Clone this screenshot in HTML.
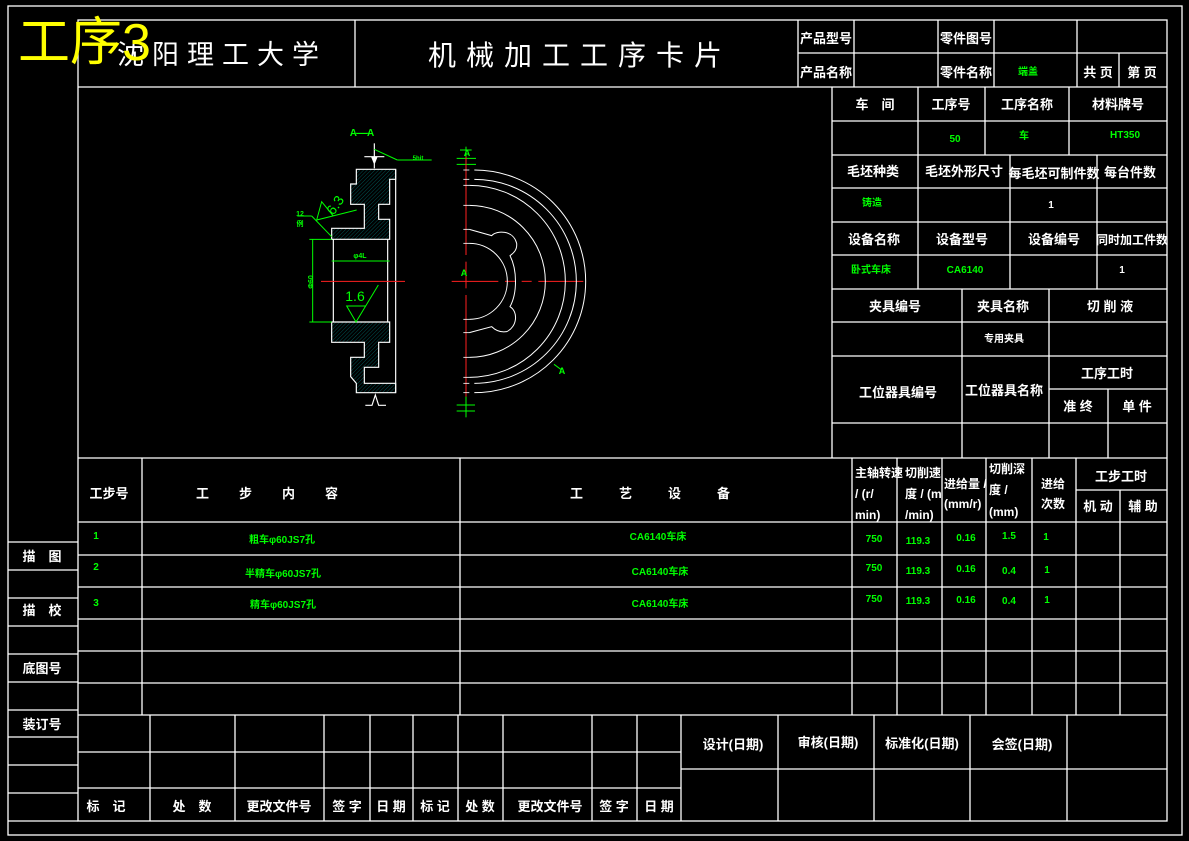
<!DOCTYPE html>
<html><head><meta charset="utf-8"><style>
html,body{margin:0;padding:0;background:#000;}
svg{display:block}
text{font-family:"Liberation Sans","Noto Sans CJK SC","WenQuanYi Zen Hei",sans-serif;fill:#fff;text-anchor:middle;font-weight:bold}
.g{fill:#00ff00}
.s{font-size:13px}
.x{font-size:10px}
</style></head><body>
<svg width="1189" height="841" viewBox="0 0 1189 841" xmlns="http://www.w3.org/2000/svg">
<defs>
<pattern id="h" width="8" height="8" patternUnits="userSpaceOnUse" patternTransform="rotate(45)">
<line x1="0" y1="0" x2="0" y2="8" stroke="#00c8c8" stroke-width="1.2"/>
</pattern>
</defs>
<rect width="1189" height="841" fill="#000"/>
<g stroke="#fff" stroke-width="1.3" fill="none">
<rect x="8" y="6" width="1174" height="829"/>
<rect x="78" y="20" width="1089" height="801"/>
<line x1="8" y1="821" x2="78" y2="821"/>
<line x1="78" y1="87" x2="1167" y2="87"/>
<line x1="355" y1="20" x2="355" y2="87"/>
<line x1="798" y1="20" x2="798" y2="87"/>
<line x1="798" y1="53" x2="1167" y2="53"/>
<line x1="854" y1="20" x2="854" y2="87"/>
<line x1="938" y1="20" x2="938" y2="87"/>
<line x1="994" y1="20" x2="994" y2="87"/>
<line x1="1077" y1="20" x2="1077" y2="87"/>
<line x1="1119" y1="53" x2="1119" y2="87"/>
<line x1="832" y1="87" x2="832" y2="458"/>
<line x1="832" y1="121" x2="1167" y2="121"/>
<line x1="832" y1="155" x2="1167" y2="155"/>
<line x1="832" y1="188" x2="1167" y2="188"/>
<line x1="832" y1="222" x2="1167" y2="222"/>
<line x1="832" y1="255" x2="1167" y2="255"/>
<line x1="832" y1="289" x2="1167" y2="289"/>
<line x1="832" y1="322" x2="1167" y2="322"/>
<line x1="832" y1="356" x2="1167" y2="356"/>
<line x1="1049" y1="389" x2="1167" y2="389"/>
<line x1="832" y1="423" x2="1167" y2="423"/>
<line x1="918" y1="87" x2="918" y2="289"/>
<line x1="985" y1="87" x2="985" y2="155"/>
<line x1="1069" y1="87" x2="1069" y2="155"/>
<line x1="1010" y1="155" x2="1010" y2="289"/>
<line x1="1097" y1="155" x2="1097" y2="289"/>
<line x1="962" y1="289" x2="962" y2="458"/>
<line x1="1049" y1="289" x2="1049" y2="458"/>
<line x1="1108" y1="389" x2="1108" y2="458"/>
<line x1="78" y1="458" x2="1167" y2="458"/>
<line x1="78" y1="522" x2="1167" y2="522"/>
<line x1="78" y1="555" x2="1167" y2="555"/>
<line x1="78" y1="587" x2="1167" y2="587"/>
<line x1="78" y1="619" x2="1167" y2="619"/>
<line x1="78" y1="651" x2="1167" y2="651"/>
<line x1="78" y1="683" x2="1167" y2="683"/>
<line x1="78" y1="715" x2="1167" y2="715"/>
<line x1="142" y1="458" x2="142" y2="715"/>
<line x1="460" y1="458" x2="460" y2="715"/>
<line x1="852" y1="458" x2="852" y2="715"/>
<line x1="897" y1="458" x2="897" y2="715"/>
<line x1="942" y1="458" x2="942" y2="715"/>
<line x1="986" y1="458" x2="986" y2="715"/>
<line x1="1032" y1="458" x2="1032" y2="715"/>
<line x1="1076" y1="458" x2="1076" y2="715"/>
<line x1="1076" y1="490" x2="1167" y2="490"/>
<line x1="1120" y1="490" x2="1120" y2="715"/>
<line x1="8" y1="542" x2="78" y2="542"/>
<line x1="8" y1="570" x2="78" y2="570"/>
<line x1="8" y1="598" x2="78" y2="598"/>
<line x1="8" y1="626" x2="78" y2="626"/>
<line x1="8" y1="654" x2="78" y2="654"/>
<line x1="8" y1="682" x2="78" y2="682"/>
<line x1="8" y1="710" x2="78" y2="710"/>
<line x1="8" y1="737" x2="78" y2="737"/>
<line x1="8" y1="765" x2="78" y2="765"/>
<line x1="8" y1="793" x2="78" y2="793"/>
<line x1="78" y1="752" x2="681" y2="752"/>
<line x1="78" y1="788" x2="681" y2="788"/>
<line x1="150" y1="715" x2="150" y2="821"/>
<line x1="235" y1="715" x2="235" y2="821"/>
<line x1="324" y1="715" x2="324" y2="821"/>
<line x1="370" y1="715" x2="370" y2="821"/>
<line x1="413" y1="715" x2="413" y2="821"/>
<line x1="458" y1="715" x2="458" y2="821"/>
<line x1="503" y1="715" x2="503" y2="821"/>
<line x1="592" y1="715" x2="592" y2="821"/>
<line x1="637" y1="715" x2="637" y2="821"/>
<line x1="681" y1="715" x2="681" y2="821"/>
<line x1="681" y1="769" x2="1167" y2="769"/>
<line x1="778" y1="715" x2="778" y2="821"/>
<line x1="874" y1="715" x2="874" y2="821"/>
<line x1="970" y1="715" x2="970" y2="821"/>
<line x1="1067" y1="715" x2="1067" y2="821"/>
</g>

<g transform="translate(280,110) scale(0.33333)">
<g stroke="#fff" stroke-width="3.5">
<polygon fill="url(#h)" points="229,178 347,178 347,208 329,208 329,283 296,283 296,328 329,328 329,388 155,388 155,355 253,355 253,283 212,283 212,222 229,222"/>
<polygon fill="url(#h)" points="155,636 329,636 329,697 296,697 296,772 253,772 253,820 347,820 347,848 229,848 229,820 212,800 212,742 253,742 253,697 155,697"/>
<line x1="347" y1="178" x2="347" y2="848"/>
<line x1="160" y1="388" x2="160" y2="636"/>
<line x1="323" y1="388" x2="323" y2="636"/>
<line x1="283" y1="100" x2="283" y2="175"/>
<line x1="253" y1="140" x2="313" y2="140"/>
<polyline fill="none" points="256,886 276,886 286,855 296,886 318,886"/>
</g>
<polygon fill="#fff" points="273,140 293,140 285,160 281,160"/>
<g stroke="#00ff00" stroke-width="3" fill="none">
<line x1="283" y1="118" x2="352" y2="150"/><line x1="352" y1="150" x2="455" y2="150"/>
<line x1="88" y1="388" x2="155" y2="388"/><line x1="88" y1="636" x2="155" y2="636"/>
<line x1="98" y1="388" x2="98" y2="636"/>
<line x1="155" y1="453" x2="329" y2="453"/>
<polyline points="295,525 228,636 200,588 258,588"/>
<polyline points="230,300 110,330 125,275 160,318"/>
<line x1="52" y1="318" x2="95" y2="318"/><line x1="95" y1="318" x2="155" y2="380"/>
<line x1="228" y1="70" x2="268" y2="70"/>
<line x1="558" y1="110" x2="558" y2="150"/><line x1="530" y1="145" x2="588" y2="145"/><line x1="530" y1="163" x2="588" y2="163"/><line x1="540" y1="120" x2="575" y2="120"/>
<line x1="558" y1="850" x2="558" y2="922"/><line x1="530" y1="885" x2="585" y2="885"/><line x1="530" y1="903" x2="585" y2="903"/>
<line x1="822" y1="763" x2="845" y2="780"/>
</g>
<g stroke="#ff2020" stroke-width="3">
<line x1="123" y1="514" x2="375" y2="514"/>
<line x1="558" y1="140" x2="558" y2="435" />
<line x1="558" y1="455" x2="558" y2="535"/>
<line x1="558" y1="555" x2="558" y2="860"/>
<line x1="515" y1="514" x2="655" y2="514"/>
<line x1="675" y1="514" x2="705" y2="514"/>
<line x1="725" y1="514" x2="755" y2="514"/>
<line x1="775" y1="514" x2="910" y2="514"/>
</g>
<g stroke="#fff" stroke-width="3" fill="none">
<path d="M583,180 A332,332 0 0 1 583,848"/>
<path d="M583,208 A306,306 0 0 1 583,820"/>
<path d="M568,226 A288,288 0 0 1 568,802"/>
<path d="M568,286 A228,228 0 0 1 568,742"/>
<path d="M568,400 A114,114 0 0 1 568,628"/>
<path d="M568,358 L635,377 C650,360 700,360 710,400 C712,420 700,430 690,437 C712,480 712,550 690,590 C715,605 712,650 680,665 C660,668 645,660 635,650 L568,668"/>
<g stroke-width="2.5">
<line x1="550" y1="180" x2="568" y2="180"/><line x1="550" y1="208" x2="568" y2="208"/><line x1="550" y1="226" x2="568" y2="226"/><line x1="550" y1="286" x2="568" y2="286"/><line x1="550" y1="358" x2="568" y2="358"/><line x1="550" y1="400" x2="568" y2="400"/>
<line x1="550" y1="848" x2="568" y2="848"/><line x1="550" y1="820" x2="568" y2="820"/><line x1="550" y1="802" x2="568" y2="802"/><line x1="550" y1="742" x2="568" y2="742"/><line x1="550" y1="668" x2="568" y2="668"/><line x1="550" y1="628" x2="568" y2="628"/>
</g>
</g>
</g>
<g>
<text x="362" y="136" class="x" style="fill:#00ff00">A—A</text>
<text x="418" y="160" font-size="6" style="fill:#00ff00">5hit</text>
<text x="335" y="210" font-size="14" transform="rotate(-55 335 205)" style="fill:#00ff00;font-weight:normal">6.3</text>
<text x="300" y="216" font-size="7" style="fill:#00ff00">12</text>
<text x="300" y="226" font-size="7" style="fill:#00ff00">例</text>
<text x="360" y="258" font-size="7" style="fill:#00ff00">φ4L</text>
<text x="355" y="301" font-size="14" style="fill:#00ff00;font-weight:normal">1.6</text>
<text x="310" y="285" font-size="7" transform="rotate(-90 310 282)" style="fill:#00ff00">Φ60</text>
<text x="467" y="156" font-size="9" style="fill:#00ff00">A</text>
<text x="464" y="276" font-size="9" style="fill:#00ff00">A</text>
<text x="562" y="374" font-size="9" style="fill:#00ff00">A</text>
</g>

<text x="222" y="64" font-size="27" style="font-weight:normal;letter-spacing:8px">沈阳理工大学</text>
<text x="580" y="65" font-size="28" style="font-weight:normal;letter-spacing:10px">机械加工工序卡片</text>
<text x="18" y="60" font-size="52" style="fill:#ffff00;font-weight:normal;text-anchor:start">工序3</text>
<text x="826" y="43" class="s">产品型号</text>
<text x="826" y="77" class="s">产品名称</text>
<text x="966" y="43" class="s">零件图号</text>
<text x="966" y="77" class="s">零件名称</text>
<text x="1028" y="75" class="x g">端盖</text>
<text x="1098" y="77" class="s">共 页</text>
<text x="1142" y="77" class="s">第 页</text>

<text x="875" y="109" class="s">车　间</text>
<text x="951" y="109" class="s">工序号</text>
<text x="1027" y="109" class="s">工序名称</text>
<text x="1118" y="109" class="s">材料牌号</text>
<text x="955" y="142" class="x g">50</text>
<text x="1024" y="139" class="x g">车</text>
<text x="1125" y="138" class="x g">HT350</text>
<text x="873" y="176" class="s">毛坯种类</text>
<text x="964" y="176" class="s">毛坯外形尺寸</text>
<text x="1054" y="178" class="s">每毛坯可制件数</text>
<text x="1130" y="177" class="s">每台件数</text>
<text x="872" y="206" class="x g">铸造</text>
<text x="1051" y="208" class="x">1</text>
<text x="874" y="244" class="s">设备名称</text>
<text x="962" y="244" class="s">设备型号</text>
<text x="1054" y="244" class="s">设备编号</text>
<text x="1132" y="244" font-size="12">同时加工件数</text>
<text x="871" y="273" class="x g">卧式车床</text>
<text x="965" y="273" class="x g">CA6140</text>
<text x="1122" y="273" class="x">1</text>
<text x="895" y="311" class="s">夹具编号</text>
<text x="1003" y="311" class="s">夹具名称</text>
<text x="1110" y="311" class="s">切 削 液</text>
<text x="1004" y="342" class="x">专用夹具</text>
<text x="898" y="397" class="s">工位器具编号</text>
<text x="1004" y="395" class="s">工位器具名称</text>
<text x="1107" y="378" class="s">工序工时</text>
<text x="1078" y="411" class="s">准 终</text>
<text x="1137" y="411" class="s">单 件</text>

<text x="109" y="498" class="s">工步号</text>
<text x="282" y="498" class="s" style="letter-spacing:30px">工步内容</text>
<text x="668" y="498" class="s" style="letter-spacing:36px">工艺设备</text>
<text x="855" y="477" font-size="12" style="text-anchor:start">主轴转速</text>
<text x="855" y="498" font-size="12" style="text-anchor:start">/ (r/</text>
<text x="855" y="519" font-size="12" style="text-anchor:start">min)</text>
<text x="905" y="477" font-size="12" style="text-anchor:start">切削速</text>
<text x="905" y="498" font-size="12" style="text-anchor:start">度 / (m</text>
<text x="905" y="519" font-size="12" style="text-anchor:start">/min)</text>
<text x="944" y="488" font-size="12" style="text-anchor:start">进给量 /</text>
<text x="944" y="508" font-size="12" style="text-anchor:start">(mm/r)</text>
<text x="989" y="473" font-size="12" style="text-anchor:start">切削深</text>
<text x="989" y="494" font-size="12" style="text-anchor:start">度 /</text>
<text x="989" y="516" font-size="12" style="text-anchor:start">(mm)</text>
<text x="1053" y="488" font-size="12">进给</text>
<text x="1053" y="508" font-size="12">次数</text>
<text x="1121" y="481" class="s">工步工时</text>
<text x="1098" y="511" class="s">机 动</text>
<text x="1143" y="511" class="s">辅 助</text>

<g>
<text x="96" y="539" class="x g">1</text>
<text x="96" y="570" class="x g">2</text>
<text x="96" y="606" class="x g">3</text>
<text x="282" y="543" class="x g">粗车φ60JS7孔</text>
<text x="283" y="577" class="x g">半精车φ60JS7孔</text>
<text x="283" y="608" class="x g">精车φ60JS7孔</text>
<text x="658" y="540" class="x g">CA6140车床</text>
<text x="660" y="575" class="x g">CA6140车床</text>
<text x="660" y="607" class="x g">CA6140车床</text>
<text x="874" y="542" class="x g">750</text>
<text x="874" y="571" class="x g">750</text>
<text x="874" y="602" class="x g">750</text>
<text x="918" y="544" class="x g">119.3</text>
<text x="918" y="574" class="x g">119.3</text>
<text x="918" y="604" class="x g">119.3</text>
<text x="966" y="541" class="x g">0.16</text>
<text x="966" y="572" class="x g">0.16</text>
<text x="966" y="603" class="x g">0.16</text>
<text x="1009" y="539" class="x g">1.5</text>
<text x="1009" y="574" class="x g">0.4</text>
<text x="1009" y="604" class="x g">0.4</text>
<text x="1046" y="540" class="x g">1</text>
<text x="1047" y="573" class="x g">1</text>
<text x="1047" y="603" class="x g">1</text>
</g>

<text x="42" y="561" class="s">描　图</text>
<text x="42" y="615" class="s">描　校</text>
<text x="42" y="673" class="s">底图号</text>
<text x="42" y="729" class="s">装订号</text>

<text x="106" y="811" class="s">标　记</text>
<text x="192" y="811" class="s">处　数</text>
<text x="279" y="811" class="s">更改文件号</text>
<text x="347" y="811" class="s">签 字</text>
<text x="391" y="811" class="s">日 期</text>
<text x="435" y="811" class="s">标 记</text>
<text x="480" y="811" class="s">处 数</text>
<text x="550" y="811" class="s">更改文件号</text>
<text x="614" y="811" class="s">签 字</text>
<text x="659" y="811" class="s">日 期</text>
<text x="733" y="749" class="s">设计(日期)</text>
<text x="828" y="747" class="s">审核(日期)</text>
<text x="922" y="748" class="s">标准化(日期)</text>
<text x="1022" y="749" class="s">会签(日期)</text>
</svg>
</body></html>
